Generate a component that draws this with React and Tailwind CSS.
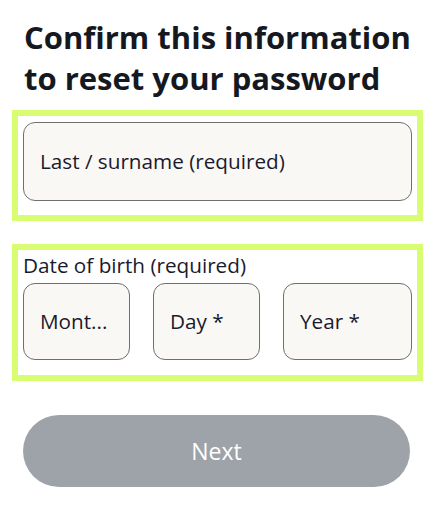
import React from "react";

const font = { fontFamily: '"Open Sans", "Noto Sans", sans-serif' };

const Field = ({ label, className = "" }) => (
  <div
    className={`flex items-center rounded-xl border border-[#6f6f6f] bg-[#faf8f4] px-4 text-[20.7px] text-[#1a1a2e] ${className}`}
  >
    <span className="truncate">{label}</span>
  </div>
);

const App = () => {
  return (
    <div className="w-[433px] h-[515px] bg-white pt-[17px]" style={font}>
      <h1 className="pl-6 pr-2 text-[31px] leading-[41px] font-bold text-[#15191f]">
        Confirm this information to reset your password
      </h1>

      <div className="ml-3 w-[411px] mt-[11px] border-[6px] border-[#d9fd72] px-[5px] pt-[6px] pb-[14px]">
        <Field label="Last / surname (required)" className="h-[79px]" />
      </div>

      <div className="ml-3 w-[411px] mt-[23px] border-[6px] border-[#d9fd72] px-[5px] pt-[1px] pb-[15px]">
        <p className="text-[20.7px] leading-[28px] text-[#1a1a2e]">Date of birth (required)</p>
        <div className="flex gap-[23px] mt-[4px]">
          <Field label="Mont..." className="w-[107px] h-[77px]" />
          <Field label="Day *" className="w-[107px] h-[77px]" />
          <Field label="Year *" className="flex-1 h-[77px]" />
        </div>
      </div>

      <div className="px-[23px] mt-[34px]">
        <button className="w-full h-[72px] rounded-full bg-[#9ea3a9] text-white text-[23px]">
          Next
        </button>
      </div>
    </div>
  );
};

export default App;
